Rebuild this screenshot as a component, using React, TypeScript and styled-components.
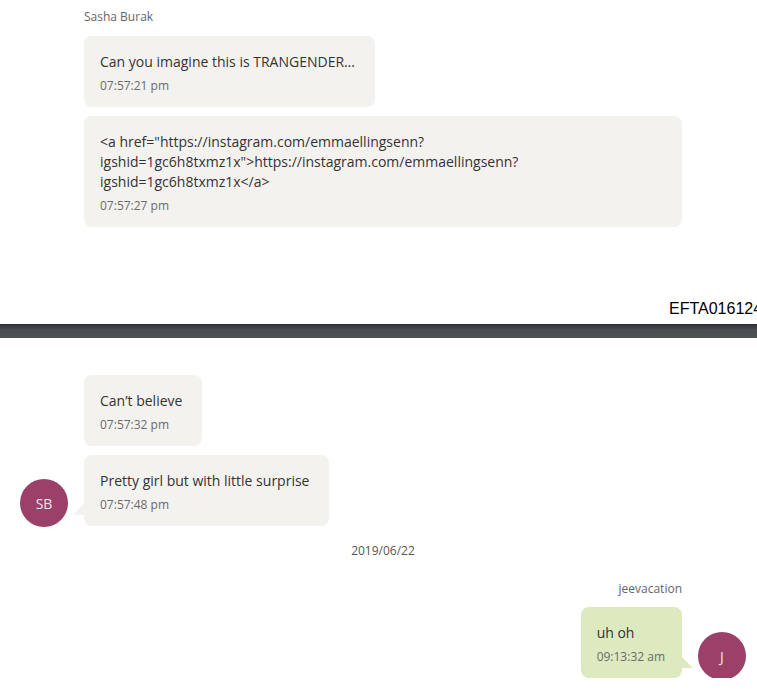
import React from "react";
import styled, { createGlobalStyle, css } from "styled-components";

const Global = createGlobalStyle`
  html, body { margin: 0; padding: 0; background: #ffffff; }
  body { overflow-x: hidden; font-family: "Open Sans", "Noto Sans", sans-serif; }
`;

const Page = styled.div`
  width: 757px;
  overflow: hidden;
`;

const Section = styled.section<{ $top: number }>`
  display: flex;
  flex-direction: column;
  padding-top: ${(p) => p.$top}px;
`;

const SenderName = styled.div<{ $right?: boolean }>`
  font-size: 12px;
  line-height: 16px;
  color: #666;
  padding: ${(p) => (p.$right ? "0 75px 0 0" : "0 0 0 84px")};
  text-align: ${(p) => (p.$right ? "right" : "left")};
  margin-bottom: ${(p) => (p.$right ? 10 : 11)}px;
`;

const Row = styled.div<{ $right?: boolean; $gap?: number }>`
  display: flex;
  align-items: flex-end;
  justify-content: ${(p) => (p.$right ? "flex-end" : "flex-start")};
  padding: ${(p) => (p.$right ? "0 11px 0 0" : "0 0 0 20px")};
  margin-bottom: ${(p) => p.$gap ?? 0}px;
`;

const AvatarSlot = styled.div`
  width: 48px;
  flex: 0 0 48px;
`;

const Avatar = styled.div<{ $right?: boolean }>`
  width: 48px;
  height: 48px;
  flex: 0 0 48px;
  border-radius: 50%;
  background: #9b4169;
  color: #f3e6ec;
  display: flex;
  align-items: center;
  justify-content: center;
  font-size: 14px;
  margin-bottom: ${(p) => (p.$right ? -2 : -1)}px;
`;

const Bubble = styled.div<{ $mine?: boolean; $tail?: boolean; $wide?: boolean }>`
  position: relative;
  box-sizing: border-box;
  max-width: 598px;
  ${(p) => p.$wide && "width: 598px;"}
  margin: ${(p) => (p.$mine ? "0 16px 0 0" : "0 0 0 16px")};
  padding: 16px ${(p) => (p.$mine ? 17 : 20)}px 13px 16px;
  border-radius: 8px;
  background: ${(p) => (p.$mine ? "#dde9be" : "#f3f2ef")};
  ${(p) =>
    p.$tail &&
    (p.$mine
      ? css`
          &::after {
            content: "";
            position: absolute;
            right: -11px;
            bottom: 10px;
            width: 11px;
            height: 11px;
            background: #dde9be;
            clip-path: polygon(0 0, 100% 100%, 0 100%);
          }
        `
      : css`
          &::after {
            content: "";
            position: absolute;
            left: -11px;
            bottom: 11px;
            width: 11px;
            height: 12px;
            background: #f3f2ef;
            clip-path: polygon(100% 0, 100% 100%, 0 100%);
          }
        `)}
`;

const Text = styled.div`
  font-size: 14px;
  line-height: 20px;
  color: #333;
  margin-bottom: 6px;
`;

const Time = styled.div`
  font-size: 12px;
  line-height: 16px;
  color: #6b6b6b;
`;

const Footer = styled.div`
  margin-top: 73px;
  padding-left: 669px;
  font-family: "Liberation Sans", Arial, sans-serif;
  font-size: 16px;
  line-height: 18px;
  height: 18px;
  color: #000;
  white-space: nowrap;
  overflow: hidden;
`;

const PageBar = styled.div`
  margin-top: 6px;
  height: 14px;
  background: linear-gradient(to bottom, #2c2e30 0%, #4a4d50 40%, #505356 100%);
`;

const DateLine = styled.div`
  font-size: 12px;
  line-height: 16px;
  color: #555;
  padding-left: 84px;
  width: 598px;
  text-align: center;
  margin: 17px 0 22px;
`;

type MsgProps = {
  text: React.ReactNode;
  time: string;
  tail?: boolean;
  gap?: number;
  initials?: string;
  wide?: boolean;
};

const Incoming: React.FC<MsgProps> = ({ text, time, tail, gap, initials, wide }) => (
  <Row $gap={gap}>
    {initials ? <Avatar>{initials}</Avatar> : <AvatarSlot />}
    <Bubble $tail={tail} $wide={wide}>
      <Text>{text}</Text>
      <Time>{time}</Time>
    </Bubble>
  </Row>
);

const Outgoing: React.FC<MsgProps> = ({ text, time, tail, gap, initials }) => (
  <Row $right $gap={gap}>
    <Bubble $mine $tail={tail}>
      <Text>{text}</Text>
      <Time>{time}</Time>
    </Bubble>
    {initials ? <Avatar $right>{initials}</Avatar> : <AvatarSlot />}
  </Row>
);

export default function App() {
  return (
    <Page>
      <Global />
      <Section $top={9}>
        <SenderName>Sasha Burak</SenderName>
        <Incoming text="Can you imagine this is TRANGENDER…" time="07:57:21 pm" gap={9} />
        <Incoming
          wide
          text={
            <>
              {'<a href="https://instagram.com/emmaellingsenn?'}
              <br />
              {'igshid=1gc6h8txmz1x">https://instagram.com/emmaellingsenn?'}
              <br />
              {"igshid=1gc6h8txmz1x</a>"}
            </>
          }
          time="07:57:27 pm"
        />
        <Footer>EFTA01612424</Footer>
        <PageBar />
      </Section>
      <Section $top={37}>
        <Incoming text="Can’t believe" time="07:57:32 pm" gap={9} />
        <Incoming text="Pretty girl but with little surprise" time="07:57:48 pm" tail initials="SB" />
        <DateLine>2019/06/22</DateLine>
        <SenderName $right>jeevacation</SenderName>
        <Outgoing text="uh oh" time="09:13:32 am" tail initials="J" />
      </Section>
    </Page>
  );
}
